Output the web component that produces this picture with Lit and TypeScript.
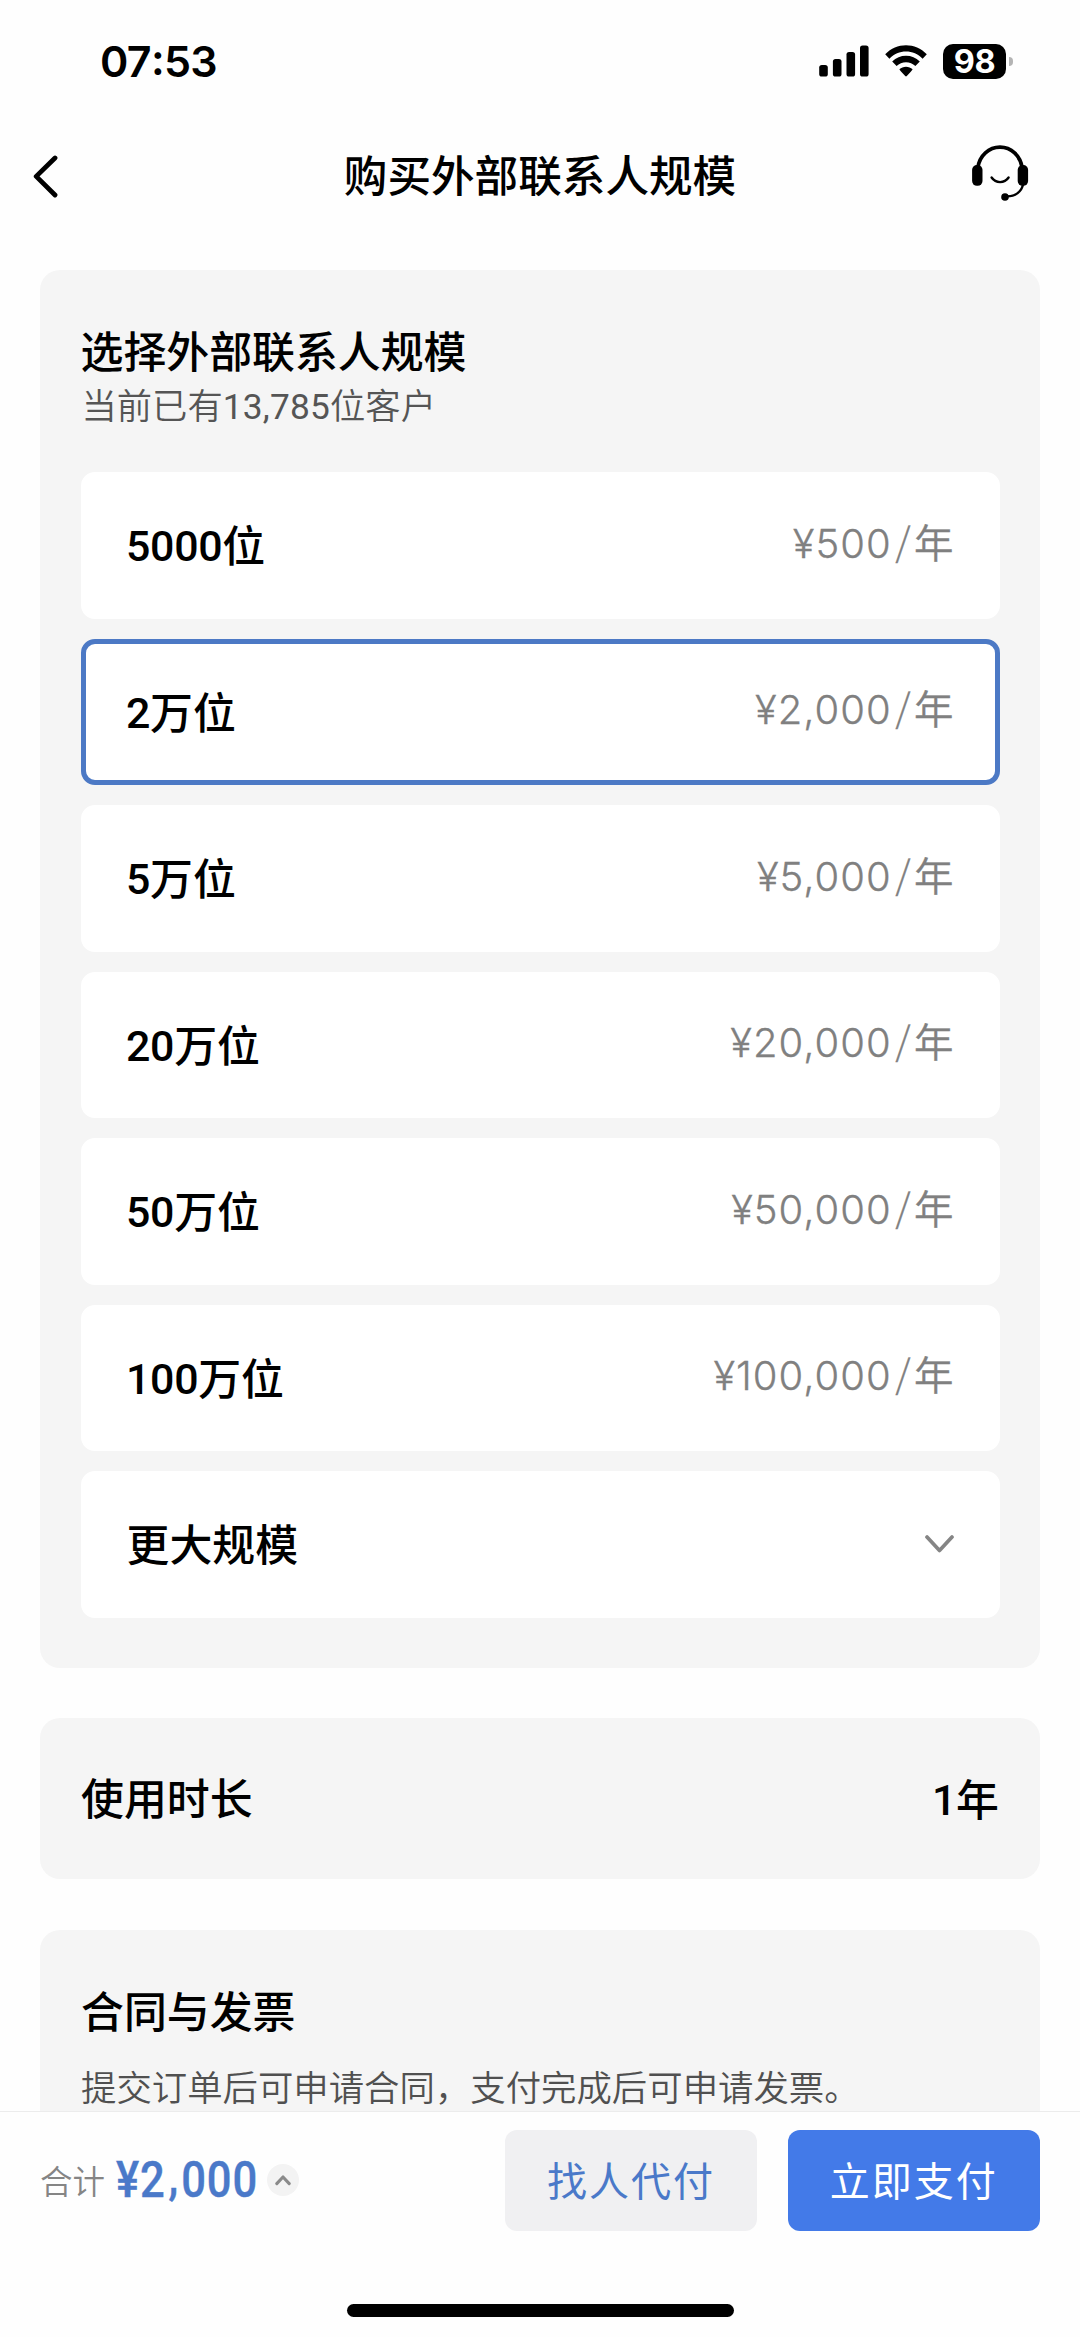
import { LitElement, html, css } from "lit";
import { customElement, property, state } from "lit/decorators.js";
import { classMap } from "lit/directives/class-map.js";

interface Plan {
  count: string;
  unit: string;
  price: string;
}

const PLANS: Plan[] = [
  { count: "5000", unit: "位", price: "¥500" },
  { count: "2", unit: "万位", price: "¥2,000" },
  { count: "5", unit: "万位", price: "¥5,000" },
  { count: "20", unit: "万位", price: "¥20,000" },
  { count: "50", unit: "万位", price: "¥50,000" },
  { count: "100", unit: "万位", price: "¥100,000" },
];

@customElement("status-bar")
class StatusBar extends LitElement {
  static styles = css`
    :host {
      display: flex;
      align-items: center;
      justify-content: space-between;
      height: 122px;
      padding: 0 67px 0 100px;
      box-sizing: border-box;
      flex: none;
      font-family: Inter, "Liberation Sans", sans-serif;
      color: #000;
    }
    .time {
      font-size: 43px;
      font-weight: 600;
      line-height: 60px;
      letter-spacing: -0.7px;
    }
    .colon {
      vertical-align: 2px;
      line-height: 0;
    }
    .icons {
      display: flex;
      align-items: center;
    }
    .signal {
      margin-right: 16px;
    }
    .wifi {
      margin-right: 16px;
    }
    .battery {
      width: 63px;
      height: 35px;
      border-radius: 10px;
      background: #000;
      color: #fff;
      font-size: 32.5px;
      font-weight: 700;
      line-height: 35px;
      text-align: center;
      letter-spacing: -0.5px;
    }
    .nub {
      width: 4px;
      height: 9px;
      margin-left: 3px;
      border-radius: 0 4px 4px 0;
      background: #b4b4b4;
    }
    svg {
      display: block;
    }
  `;

  render() {
    return html`
      <span class="time">07<span class="colon">:</span>53</span>
      <div class="icons">
        <svg class="signal" width="50" height="32" viewBox="0 0 50 32">
          <rect x="0.2" y="20" width="8.6" height="11.6" rx="2.6" />
          <rect x="13.9" y="13.9" width="8.6" height="17.7" rx="2.6" />
          <rect x="27.5" y="7" width="8.6" height="24.6" rx="2.6" />
          <rect x="41" y="0.4" width="8.6" height="31.2" rx="2.6" />
        </svg>
        <svg class="wifi" width="42" height="32" viewBox="0 0 42 32">
          <path d="M0.2 9.2C6 3.3 13.3 0.2 21 0.2S36 3.3 41.8 9.2L37.6 13.7C33 9 27.2 6.6 21 6.6S9 9 4.4 13.7Z" />
          <path d="M7.2 16.4C11 12.8 15.8 10.8 21 10.8S31 12.8 34.8 16.4L30.4 21C27.8 18.6 24.6 17.2 21 17.2S14.2 18.6 11.6 21Z" />
          <path d="M14.4 24.2C16.2 22.6 18.5 21.7 21 21.7S25.8 22.6 27.6 24.2Q27.2 25.2 26 26.4L21.8 31.1Q21 31.8 20.2 31.1L16 26.4Q14.8 25.2 14.4 24.2Z" />
        </svg>
        <div class="battery">98</div>
        <div class="nub"></div>
      </div>
    `;
  }
}

@customElement("nav-bar")
class NavBar extends LitElement {
  @property() heading = "";

  static styles = css`
    :host {
      display: grid;
      grid-template-columns: 120px 1fr 120px;
      align-items: center;
      height: 101px;
      flex: none;
      color: #000;
    }
    .title {
      padding-top: 1px;
      font-family: "Noto Sans CJK SC", sans-serif;
      font-size: 43.6px;
      font-weight: 500;
      line-height: 60px;
      text-align: center;
      white-space: nowrap;
    }
    .back {
      display: block;
      margin: 6px 0 0 32px;
    }
    .service {
      display: block;
      margin: 1px 0 0 9.5px;
    }
  `;

  render() {
    return html`
      <svg class="back" width="28" height="44" viewBox="0 0 28 44" fill="none">
        <path d="M23 4L4.2 22.4L23 41" stroke="#000" stroke-width="4.8" stroke-linecap="round" stroke-linejoin="round" />
      </svg>
      <span class="title">${this.heading}</span>
      <svg class="service" width="60" height="58" viewBox="0 0 60 58" fill="none" stroke="#000" stroke-linecap="round">
        <path d="M7.9 25V23.5C9.6 11.5 18.9 3.2 30 3.2S50.4 11.5 52.1 23.5V25" stroke-width="3.7" />
        <rect x="2.1" y="21" width="10.4" height="20.8" rx="4.8" fill="#000" stroke="none" />
        <rect x="47.7" y="21" width="10.4" height="20.8" rx="4.8" fill="#000" stroke="none" />
        <path d="M21.6 33.5C25.8 39.6 34.4 39.6 38.6 33.5" stroke-width="2.4" />
        <path d="M53 40.5C51.6 47.5 45.5 52 37 52.4" stroke-width="2.4" />
        <circle cx="35" cy="53" r="3.8" fill="#000" stroke="none" />
      </svg>
    `;
  }
}

@customElement("plan-option")
class PlanOption extends LitElement {
  @property({ type: Boolean }) selected = false;

  static styles = css`
    .option {
      display: flex;
      align-items: center;
      justify-content: space-between;
      height: 146.5px;
      box-sizing: border-box;
      padding: 0 41px;
      border: 5px solid #fff;
      border-radius: 14px;
      background: #fff;
    }
    .selected {
      border-color: #4c79c5;
    }
  `;

  render() {
    return html`
      <div class=${classMap({ option: true, selected: this.selected })}>
        <slot name="label"></slot>
        <slot name="value"></slot>
      </div>
    `;
  }
}

@customElement("app-root")
class AppRoot extends LitElement {
  @state() private selectedIndex = 1;

  static styles = css`
    :host {
      display: flex;
      flex-direction: column;
      width: 1080px;
      height: 2337px;
      overflow: hidden;
      background: #fefefe;
      color: #000;
      font-family: Roboto, "Noto Sans CJK SC", sans-serif;
    }
    .content {
      flex: 1;
      min-height: 0;
      overflow: hidden;
      display: flex;
      flex-direction: column;
      gap: 50.7px;
      padding: 47px 40px 0;
    }
    .card {
      flex: none;
      background: #f5f5f5;
      border-radius: 20px;
      box-sizing: border-box;
    }
    .scale {
      padding: 49px 40.5px 50px;
    }
    .duration {
      display: flex;
      align-items: center;
      justify-content: space-between;
      height: 161.3px;
      padding: 0 41px;
    }
    .contract {
      padding: 49px 41px 60px;
    }
    .heading {
      font-family: "Noto Sans CJK SC", sans-serif;
      font-size: 42.9px;
      font-weight: 500;
      line-height: 60px;
    }
    .sub {
      margin-top: 8px;
      padding-left: 1px;
      font-size: 35.3px;
      line-height: 40px;
      font-weight: 350;
      color: #555;
    }
    .number {
      font-weight: 400;
      letter-spacing: 0.2px;
    }
    .desc {
      margin-top: 27px;
      font-family: "Noto Sans CJK SC", sans-serif;
      font-size: 35.4px;
      font-weight: 350;
      line-height: 40px;
      color: #505050;
      white-space: nowrap;
    }
    .options {
      display: flex;
      flex-direction: column;
      gap: 20px;
      margin-top: 45px;
    }
    .label {
      font-size: 42.9px;
      font-weight: 500;
      line-height: 60px;
      padding-top: 3px;
    }
    .digits {
      vertical-align: 1px;
      letter-spacing: -0.3px;
      margin-left: -0.5px;
    }
    .price {
      font-family: Inter, sans-serif;
      font-size: 40px;
      font-weight: 300;
      line-height: 60px;
      letter-spacing: 1px;
      padding-bottom: 3px;
      color: #808080;
      -webkit-text-stroke: 0.3px #808080;
    }
    .slash {
      padding: 0 2.5px 0 3.5px;
      font-family: "Noto Sans CJK SC", sans-serif;
      font-size: 39px;
      line-height: 0;
      vertical-align: 2px;
    }
    .period {
      font-family: "Noto Sans CJK SC", sans-serif;
      font-size: 39.5px;
      font-weight: 350;
      line-height: 0;
      letter-spacing: 0;
    }
    .footer {
      display: flex;
      flex-direction: column;
      align-items: center;
      justify-content: space-between;
      height: 226px;
      flex: none;
      box-sizing: border-box;
      padding: 18px 40px 20.5px;
      border-top: 1.5px solid #ececec;
    }
    .bar {
      display: flex;
      align-items: center;
      width: 100%;
      height: 100.7px;
    }
    .sum {
      font-family: "Noto Sans CJK SC", sans-serif;
      font-size: 32.5px;
      font-weight: 350;
      line-height: 50px;
      color: #858585;
    }
    .total {
      width: 144px;
      margin-left: 11px;
      font-family: Roboto, sans-serif;
      font-size: 49.5px;
      font-weight: 500;
      line-height: 60px;
      color: #4a79c9;
      white-space: nowrap;
    }
    .amount {
      display: inline-block;
      transform: scaleX(0.88);
      transform-origin: left center;
      letter-spacing: 0.9px;
      -webkit-text-stroke: 0.4px #4a79c9;
    }
    .comma {
      padding: 0 2.5px 0 3.5px;
      line-height: 0;
      vertical-align: 3px;
    }
    .expand {
      display: flex;
      align-items: center;
      justify-content: center;
      width: 32px;
      height: 32px;
      margin-left: 7px;
      border-radius: 50%;
      background: #f3f3f3;
    }
    .actions {
      display: flex;
      gap: 30.5px;
      margin-left: auto;
    }
    .button {
      width: 252.3px;
      height: 100.7px;
      padding: 0 0 3px;
      border: 0;
      border-radius: 12px;
      font-family: "Noto Sans CJK SC", sans-serif;
      font-size: 40px;
      font-weight: 400;
      line-height: 60px;
      letter-spacing: 2px;
    }
    .ghost {
      background: #f0f0f2;
      color: #4a79c9;
    }
    .primary {
      background: #437ae8;
      color: #fff;
    }
    .home {
      width: 387px;
      height: 12.7px;
      border-radius: 7px;
      background: #000;
    }
  `;

  render() {
    return html`
      <status-bar></status-bar>
      <nav-bar heading="购买外部联系人规模"></nav-bar>
      <main class="content">
        <section class="card scale">
          <div class="heading">选择外部联系人规模</div>
          <div class="sub">当前已有<span class="number">13,785</span>位客户</div>
          <div class="options">
            ${PLANS.map(
              (plan, i) => html`
                <plan-option ?selected=${i === this.selectedIndex} @click=${() => (this.selectedIndex = i)}>
                  <span slot="label" class="label"><span class="digits">${plan.count}</span>${plan.unit}</span>
                  <span slot="value" class="price">${plan.price}<span class="slash">/</span><span class="period">年</span></span>
                </plan-option>
              `,
            )}
            <plan-option>
              <span slot="label" class="label">更大规模</span>
              <svg slot="value" width="29" height="19" viewBox="0 0 29 19" fill="none">
                <path d="M2 2L14.5 15.5L27 2" stroke="#858585" stroke-width="3.7" stroke-linecap="round" stroke-linejoin="round" />
              </svg>
            </plan-option>
          </div>
        </section>
        <section class="card duration">
          <span class="label">使用时长</span>
          <span class="label"><span class="digits">1</span>年</span>
        </section>
        <section class="card contract">
          <div class="heading">合同与发票</div>
          <div class="desc">提交订单后可申请合同，支付完成后可申请发票。</div>
        </section>
      </main>
      <footer class="footer">
        <div class="bar">
          <span class="sum">合计</span>
          <span class="total"><span class="amount">¥2<span class="comma">,</span>000</span></span>
          <span class="expand">
            <svg width="16" height="11" viewBox="0 0 16 11" fill="none">
              <path d="M1.8 8.6L8 2L14.2 8.6" stroke="#8a8a8a" stroke-width="3.1" stroke-linecap="round" stroke-linejoin="round" />
            </svg>
          </span>
          <div class="actions">
            <button class="button ghost">找人代付</button>
            <button class="button primary">立即支付</button>
          </div>
        </div>
        <div class="home"></div>
      </footer>
    `;
  }
}
